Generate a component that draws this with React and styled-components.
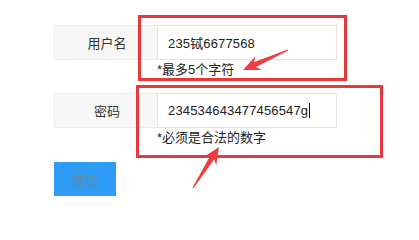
import React from "react";
import styled, { createGlobalStyle } from "styled-components";

const GlobalStyle = createGlobalStyle`
  html, body {
    margin: 0;
    padding: 0;
    background: #ffffff;
  }
  body {
    font-family: "Liberation Sans", "Noto Sans CJK SC", sans-serif;
    color: #333;
  }
`;

const Page = styled.div`
  position: relative;
  width: 419px;
  height: 228px;
  overflow: hidden;
  padding: 25px 0 0 54px;
  box-sizing: border-box;
`;

const Form = styled.form`
  display: flex;
  flex-direction: column;
`;

const Field = styled.div`
  display: flex;
  flex-direction: column;
  margin-bottom: ${(p) => p.gap}px;
`;

const InputRow = styled.div`
  display: flex;
  height: 35px;
`;

const Label = styled.div`
  width: 103px;
  box-sizing: border-box;
  display: flex;
  align-items: center;
  justify-content: center;
  padding-left: 2px;
  background: #f7f7f7;
  border: 1px solid #ebebeb;
  border-right: none;
  font-size: 13px;
  color: #333;
`;

const Input = styled.div`
  width: 180px;
  box-sizing: border-box;
  display: flex;
  align-items: center;
  padding-left: 10px;
  background: #fff;
  border: 1px solid #e3e3e3;
  font-size: 13px;
  color: #222;
  letter-spacing: 0.15px;
`;

const Caret = styled.span`
  display: inline-block;
  width: 1px;
  height: 15px;
  margin-left: 1px;
  background: #111;
`;

const Hint = styled.div`
  margin-left: 103px;
  height: 20px;
  line-height: 20px;
  font-size: 13px;
  color: #222;
`;

const Submit = styled.button`
  width: 62px;
  height: 34px;
  border: none;
  background: #2d9cf6;
  color: #5a8cb0;
  font-family: "Liberation Sans", "Noto Sans CJK SC", sans-serif;
  font-size: 13px;
  padding: 0;
  cursor: pointer;
`;

const Mark = styled.div`
  position: absolute;
  left: ${(p) => p.x}px;
  top: ${(p) => p.y}px;
  width: ${(p) => p.w}px;
  height: ${(p) => p.h}px;
  box-sizing: border-box;
  border: 3px solid #e8383c;
  pointer-events: none;
`;

const Overlay = styled.svg`
  position: absolute;
  left: 0;
  top: 0;
  pointer-events: none;
`;

function Arrow({ from, to }) {
  const dx = to[0] - from[0];
  const dy = to[1] - from[1];
  const L = Math.hypot(dx, dy);
  const angle = (Math.atan2(dy, dx) * 180) / Math.PI;
  const pts = [
    [0, -0.6],
    [L - 13, -2.6],
    [L - 17, -7.5],
    [L, 0],
    [L - 17, 7.5],
    [L - 13, 2.6],
    [0, 0.6],
  ]
    .map((p) => p.join(","))
    .join(" ");
  return (
    <g transform={`translate(${from[0]} ${from[1]}) rotate(${angle})`}>
      <polygon points={pts} fill="#ee3b3e" />
    </g>
  );
}

export default function App() {
  return (
    <>
      <GlobalStyle />
      <Page>
        <Form>
          <Field gap={13}>
            <InputRow>
              <Label>用户名</Label>
              <Input>235铽6677568</Input>
            </InputRow>
            <Hint>*最多5个字符</Hint>
          </Field>
          <Field gap={14}>
            <InputRow>
              <Label>密码</Label>
              <Input>
                234534643477456547g
                <Caret />
              </Input>
            </InputRow>
            <Hint>*必须是合法的数字</Hint>
          </Field>
          <div>
            <Submit type="button">提交</Submit>
          </div>
        </Form>

        <Mark x={138} y={15} w={209} h={66} />
        <Mark x={136} y={85} w={247} h={73} />

        <Overlay width="419" height="228">
          <Arrow from={[288, 50]} to={[243, 70]} />
          <Arrow from={[193, 188]} to={[219, 147]} />
        </Overlay>
      </Page>
    </>
  );
}
